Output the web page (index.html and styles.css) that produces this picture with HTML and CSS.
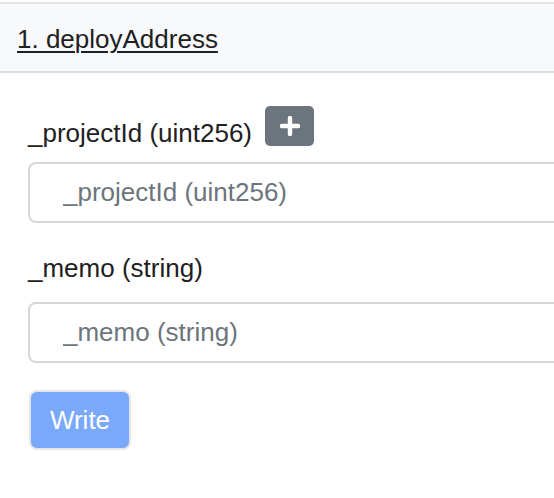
FILE: index.html
```html
<!DOCTYPE html>
<html>
<head>
<meta charset="utf-8">
<link rel="stylesheet" href="styles.css">
</head>
<body>
<div class="card">
  <div class="card-header">
    <a class="fn-link" href="#">1. deployAddress</a>
  </div>
  <div class="card-body">
    <div class="field">
      <div class="label-row">
        <label class="field-label">_projectId (uint256)</label>
        <button class="btn-add" type="button" aria-label="add">
          <svg width="20" height="20" viewBox="0 0 20 20"><path d="M10 2v16M2 10h16" stroke="#fff" stroke-width="4.4" stroke-linecap="round"/></svg>
        </button>
      </div>
      <input class="form-input" type="text" placeholder="_projectId (uint256)">
    </div>
    <div class="field field-second">
      <label class="field-label">_memo (string)</label>
      <input class="form-input form-input-second" type="text" placeholder="_memo (string)">
    </div>
    <button class="btn-write" type="button">Write</button>
  </div>
</div>
</body>
</html>
```
FILE: styles.css
```css
html, body {
  margin: 0;
  padding: 0;
  background: #fff;
  font-family: "Liberation Sans", Arial, sans-serif;
  color: #1e2022;
}
.card {
  margin-top: 2px;
  width: 100%;
  overflow: hidden;
}
.card-header {
  background: #f8f9fa;
  border-top: 2px solid #e2e4e6;
  border-bottom: 2px solid #dcdfe2;
  height: 67px;
  box-sizing: content-box;
  padding: 0 17px;
  display: flex;
  align-items: flex-start;
}
.fn-link {
  font-size: 26px;
  line-height: 30px;
  margin-top: 20px;
  color: #1e2022;
  text-decoration: underline;
  text-decoration-thickness: 2px;
  text-underline-offset: 3px;
}
.card-body {
  padding: 33px 0 40px 28px;
}
.label-row {
  display: flex;
  align-items: flex-start;
  gap: 13px;
}
.field-label {
  display: block;
  font-size: 26px;
  line-height: 30px;
  color: #1e2022;
}
.label-row .field-label {
  margin-top: 12px;
}
.btn-add {
  width: 49px;
  height: 40px;
  border: none;
  border-radius: 5px;
  background: #6c757d;
  padding: 0;
  display: flex;
  align-items: center;
  justify-content: center;
}
.form-input {
  display: block;
  box-sizing: border-box;
  width: calc(100% + 20px);
  height: 61px;
  margin-top: 14px;
  border: 2px solid #d3d7db;
  border-radius: 8px;
  padding: 0 0 0 33px;
  font-family: "Liberation Sans", Arial, sans-serif;
  font-size: 26px;
  color: #1e2022;
  background: #fff;
}
.form-input::placeholder {
  color: #6c757d;
}
.field-second {
  margin-top: 30px;
}
.form-input-second {
  margin-top: 19px;
}
.btn-write {
  margin-top: 27px;
  margin-left: 1px;
  box-sizing: border-box;
  width: 102px;
  height: 60px;
  border: 2px solid #e4e6ea;
  border-radius: 8px;
  background: #7aa8fa;
  color: #fff;
  font-family: "Liberation Sans", Arial, sans-serif;
  font-size: 26px;
  padding: 0;
}
```
